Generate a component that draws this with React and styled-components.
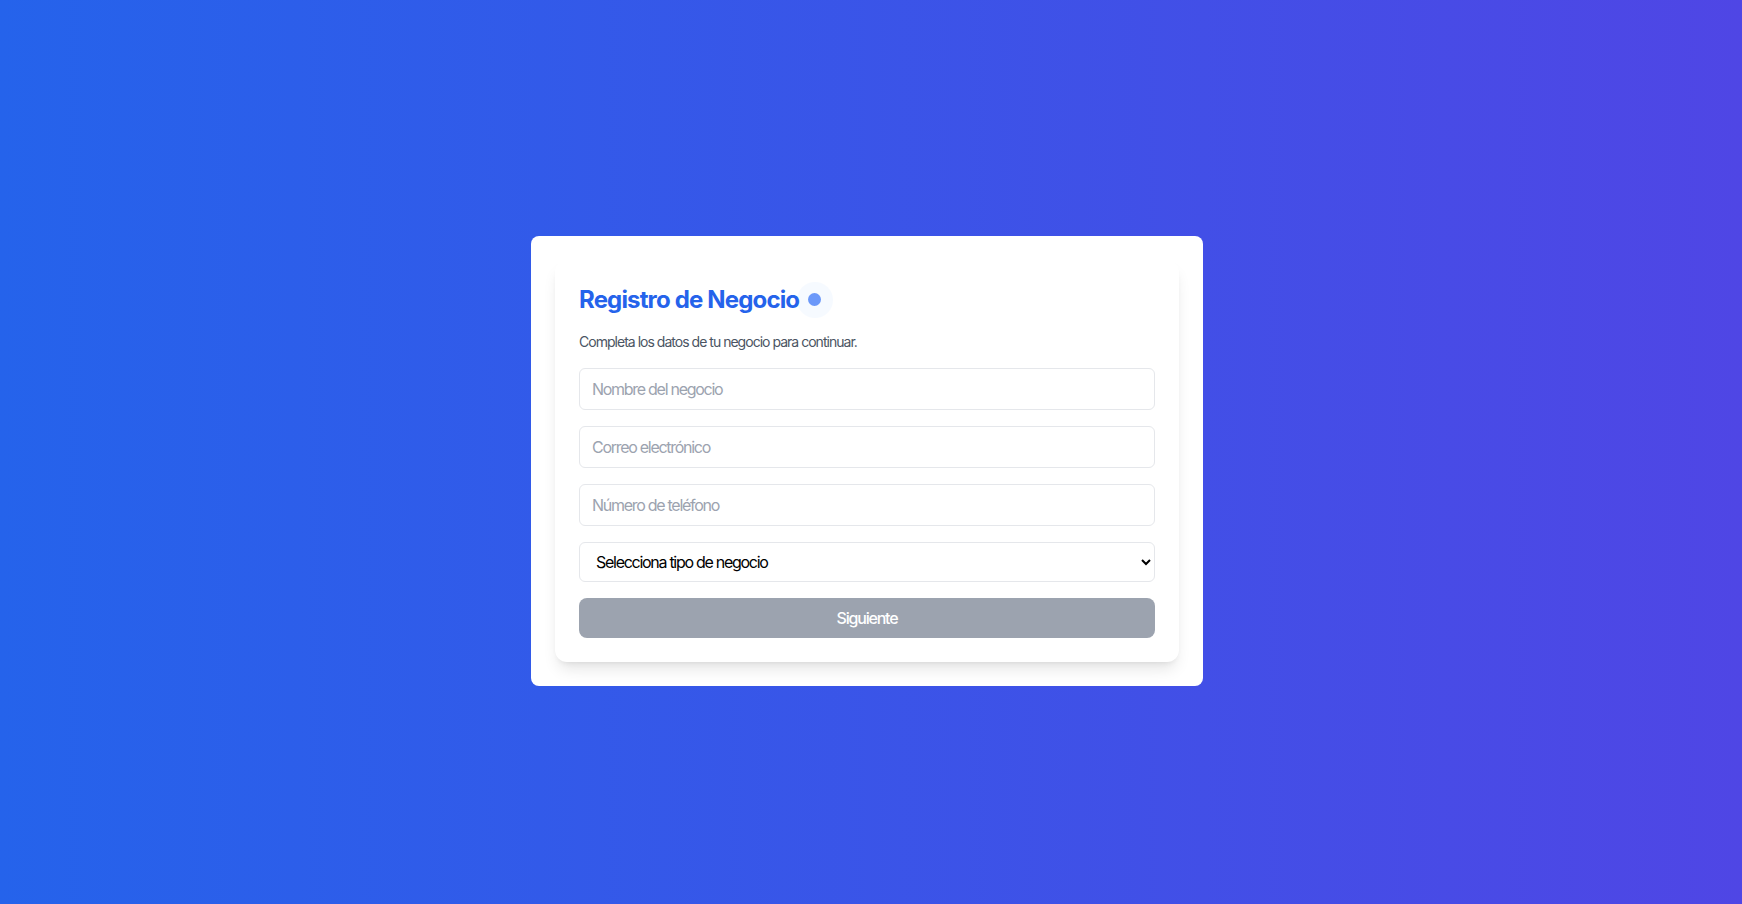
import React, { useState } from "react";
import styled, { createGlobalStyle } from "styled-components";

const GlobalStyle = createGlobalStyle`
  * {
    box-sizing: border-box;
  }
  body {
    margin: 0;
    font-family: Inter, "Noto Sans", sans-serif;
  }
`;

function App() {
  const [form, setForm] = useState({ name: "", email: "", phone: "", type: "" });
  const ready = form.name && form.email && form.phone && form.type;

  const update = (key) => (e) => setForm({ ...form, [key]: e.target.value });

  return (
    <Page>
      <GlobalStyle />
      <Outer>
        <Card>
          <Title>
            Registro de Negocio
            <Pulse>
              <Dot />
            </Pulse>
          </Title>
          <Subtitle>Completa los datos de tu negocio para continuar.</Subtitle>
          <Form onSubmit={(e) => e.preventDefault()}>
            <Input placeholder="Nombre del negocio" value={form.name} onChange={update("name")} />
            <Input type="email" placeholder="Correo electrónico" value={form.email} onChange={update("email")} />
            <Input type="tel" placeholder="Número de teléfono" value={form.phone} onChange={update("phone")} />
            <Select value={form.type} onChange={update("type")}>
              <option value="">Selecciona tipo de negocio</option>
              <option value="restaurante">Restaurante</option>
              <option value="tienda">Tienda</option>
              <option value="servicios">Servicios</option>
            </Select>
            <Button type="submit" disabled={!ready}>
              Siguiente
            </Button>
          </Form>
        </Card>
      </Outer>
    </Page>
  );
}

export default App;

const Page = styled.div`
  min-height: 100vh;
  display: flex;
  align-items: center;
  justify-content: center;
  padding: 17px 8px 0 0;
  background: linear-gradient(to right, #2563eb, #4f46e5);
`;

const Outer = styled.div`
  width: 672px;
  padding: 24px;
  background: #ffffff;
  border-radius: 8px;
`;

const Card = styled.div`
  padding: 24px;
  background: #ffffff;
  border-radius: 12px;
  box-shadow: 0 10px 15px -3px rgba(0, 0, 0, 0.1), 0 4px 6px -4px rgba(0, 0, 0, 0.1);
`;

const Title = styled.h2`
  display: flex;
  align-items: center;
  gap: 9px;
  margin: 0 0 16px;
  font-size: 24px;
  line-height: 32px;
  font-weight: 700;
  letter-spacing: -0.035em;
  color: #2563eb;
`;

const Pulse = styled.span`
  display: inline-flex;
  align-items: center;
  justify-content: center;
  width: 13px;
  height: 13px;
  position: relative;

  &::before {
    content: "";
    position: absolute;
    left: 50%;
    top: 50%;
    width: 36px;
    height: 36px;
    margin: -18px 0 0 -18px;
    border-radius: 50%;
    background: rgba(96, 165, 250, 0.06);
  }
`;

const Dot = styled.span`
  position: relative;
  width: 13px;
  height: 13px;
  border-radius: 50%;
  background: #6b98f9;
`;

const Subtitle = styled.p`
  margin: 0 0 16px;
  font-size: 14px;
  line-height: 20px;
  letter-spacing: -0.07em;
  color: #4b5563;
`;

const Form = styled.form`
  display: flex;
  flex-direction: column;
  gap: 16px;
`;

const Input = styled.input`
  width: 100%;
  padding: 8px 12px;
  font-family: inherit;
  font-size: 16px;
  line-height: 24px;
  letter-spacing: -0.08em;
  color: #111827;
  border: 1px solid #e5e7eb;
  border-radius: 6px;
  background: #ffffff;
  outline: none;

  &::placeholder {
    color: #9ca3af;
  }
`;

const Select = styled.select`
  width: 100%;
  padding: 8px 12px;
  font-family: inherit;
  font-size: 16px;
  letter-spacing: -0.08em;
  color: #000000;
  border: 1px solid #e5e7eb;
  border-radius: 6px;
  background: #ffffff;
  outline: none;
`;

const Button = styled.button`
  width: 100%;
  padding: 8px 16px;
  font-family: inherit;
  font-size: 16px;
  line-height: 24px;
  font-weight: 500;
  letter-spacing: -0.075em;
  color: #ffffff;
  border: none;
  border-radius: 8px;
  background: ${(p) => (p.disabled ? "#9ca3af" : "#2563eb")};
  cursor: ${(p) => (p.disabled ? "not-allowed" : "pointer")};
`;
